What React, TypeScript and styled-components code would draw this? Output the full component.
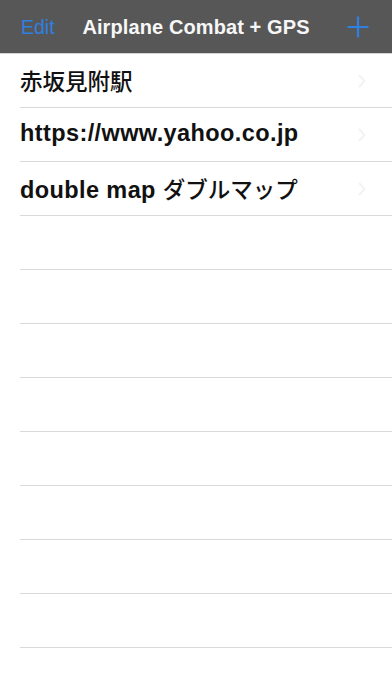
import React from "react";
import styled, { createGlobalStyle } from "styled-components";

const Global = createGlobalStyle`
  html, body { margin: 0; padding: 0; background: #ffffff; }
  body { font-family: "Liberation Sans", "Noto Sans CJK JP", sans-serif; overflow: hidden; }
`;

const Screen = styled.div`
  width: 392px;
  height: 696px;
  display: flex;
  flex-direction: column;
  background: #ffffff;
  overflow: hidden;
`;

const NavBar = styled.header`
  height: 54px;
  flex: none;
  background: #575757;
  border-bottom: 1px solid #d4d4d4;
  display: grid;
  grid-template-columns: 70px 1fr 70px;
  align-items: center;
  box-sizing: border-box;
  padding-top: 1px;
`;

const EditButton = styled.span`
  color: #2f80e2;
  font-size: 19.5px;
  padding-left: 21px;
`;

const Title = styled.h1`
  margin: 0;
  text-align: center;
  color: #f7f7f7;
  font-size: 20px;
  font-weight: 700;
  letter-spacing: 0.1px;
  white-space: nowrap;
`;

const AddButton = styled.span`
  display: flex;
  justify-content: flex-end;
  padding-right: 23px;
`;

const List = styled.ul`
  list-style: none;
  margin: 0;
  padding: 0;
  flex: 1;
`;

const Row = styled.li`
  height: 54px;
  box-sizing: border-box;
  margin-left: 20px;
  border-bottom: 1.5px solid #d9d9d9;
  display: flex;
  align-items: center;
  justify-content: space-between;
  padding-right: 26px;
`;

const RowLabel = styled.span`
  color: #111111;
  font-size: 23.5px;
  font-weight: 700;
  letter-spacing: 0.4px;
  white-space: nowrap;
  margin-top: -2px;
`;

const Jp = styled.span`
  font-family: "Noto Sans CJK JP", sans-serif;
  font-weight: 500;
  font-size: 22.5px;
  letter-spacing: 0;
`;

const Chevron = () => (
  <svg width="8" height="14" viewBox="0 0 8 14">
    <path d="M1.5 1.5 L6.5 7 L1.5 12.5" fill="none" stroke="#f3f3f3" strokeWidth="2" strokeLinecap="round" strokeLinejoin="round" />
  </svg>
);

const PlusIcon = () => (
  <svg width="22" height="22" viewBox="0 0 22 22">
    <path d="M11 0.5 V21.5 M0.5 11 H21.5" stroke="#2f80e2" strokeWidth="2.2" />
  </svg>
);

type Item = { latin?: string; jp?: string };

const items: Item[] = [
  { jp: "赤坂見附駅" },
  { latin: "https://www.yahoo.co.jp" },
  { latin: "double map ", jp: "ダブルマップ" },
];

export default function App() {
  const rows: (Item | null)[] = [...items, ...Array(9).fill(null)];
  return (
    <Screen>
      <Global />
      <NavBar>
        <EditButton>Edit</EditButton>
        <Title>Airplane Combat + GPS</Title>
        <AddButton>
          <PlusIcon />
        </AddButton>
      </NavBar>
      <List>
        {rows.map((it, i) => (
          <Row key={i}>
            <RowLabel>
              {it?.latin}
              {it?.jp ? <Jp>{it.jp}</Jp> : null}
            </RowLabel>
            {it ? <Chevron /> : null}
          </Row>
        ))}
      </List>
    </Screen>
  );
}
